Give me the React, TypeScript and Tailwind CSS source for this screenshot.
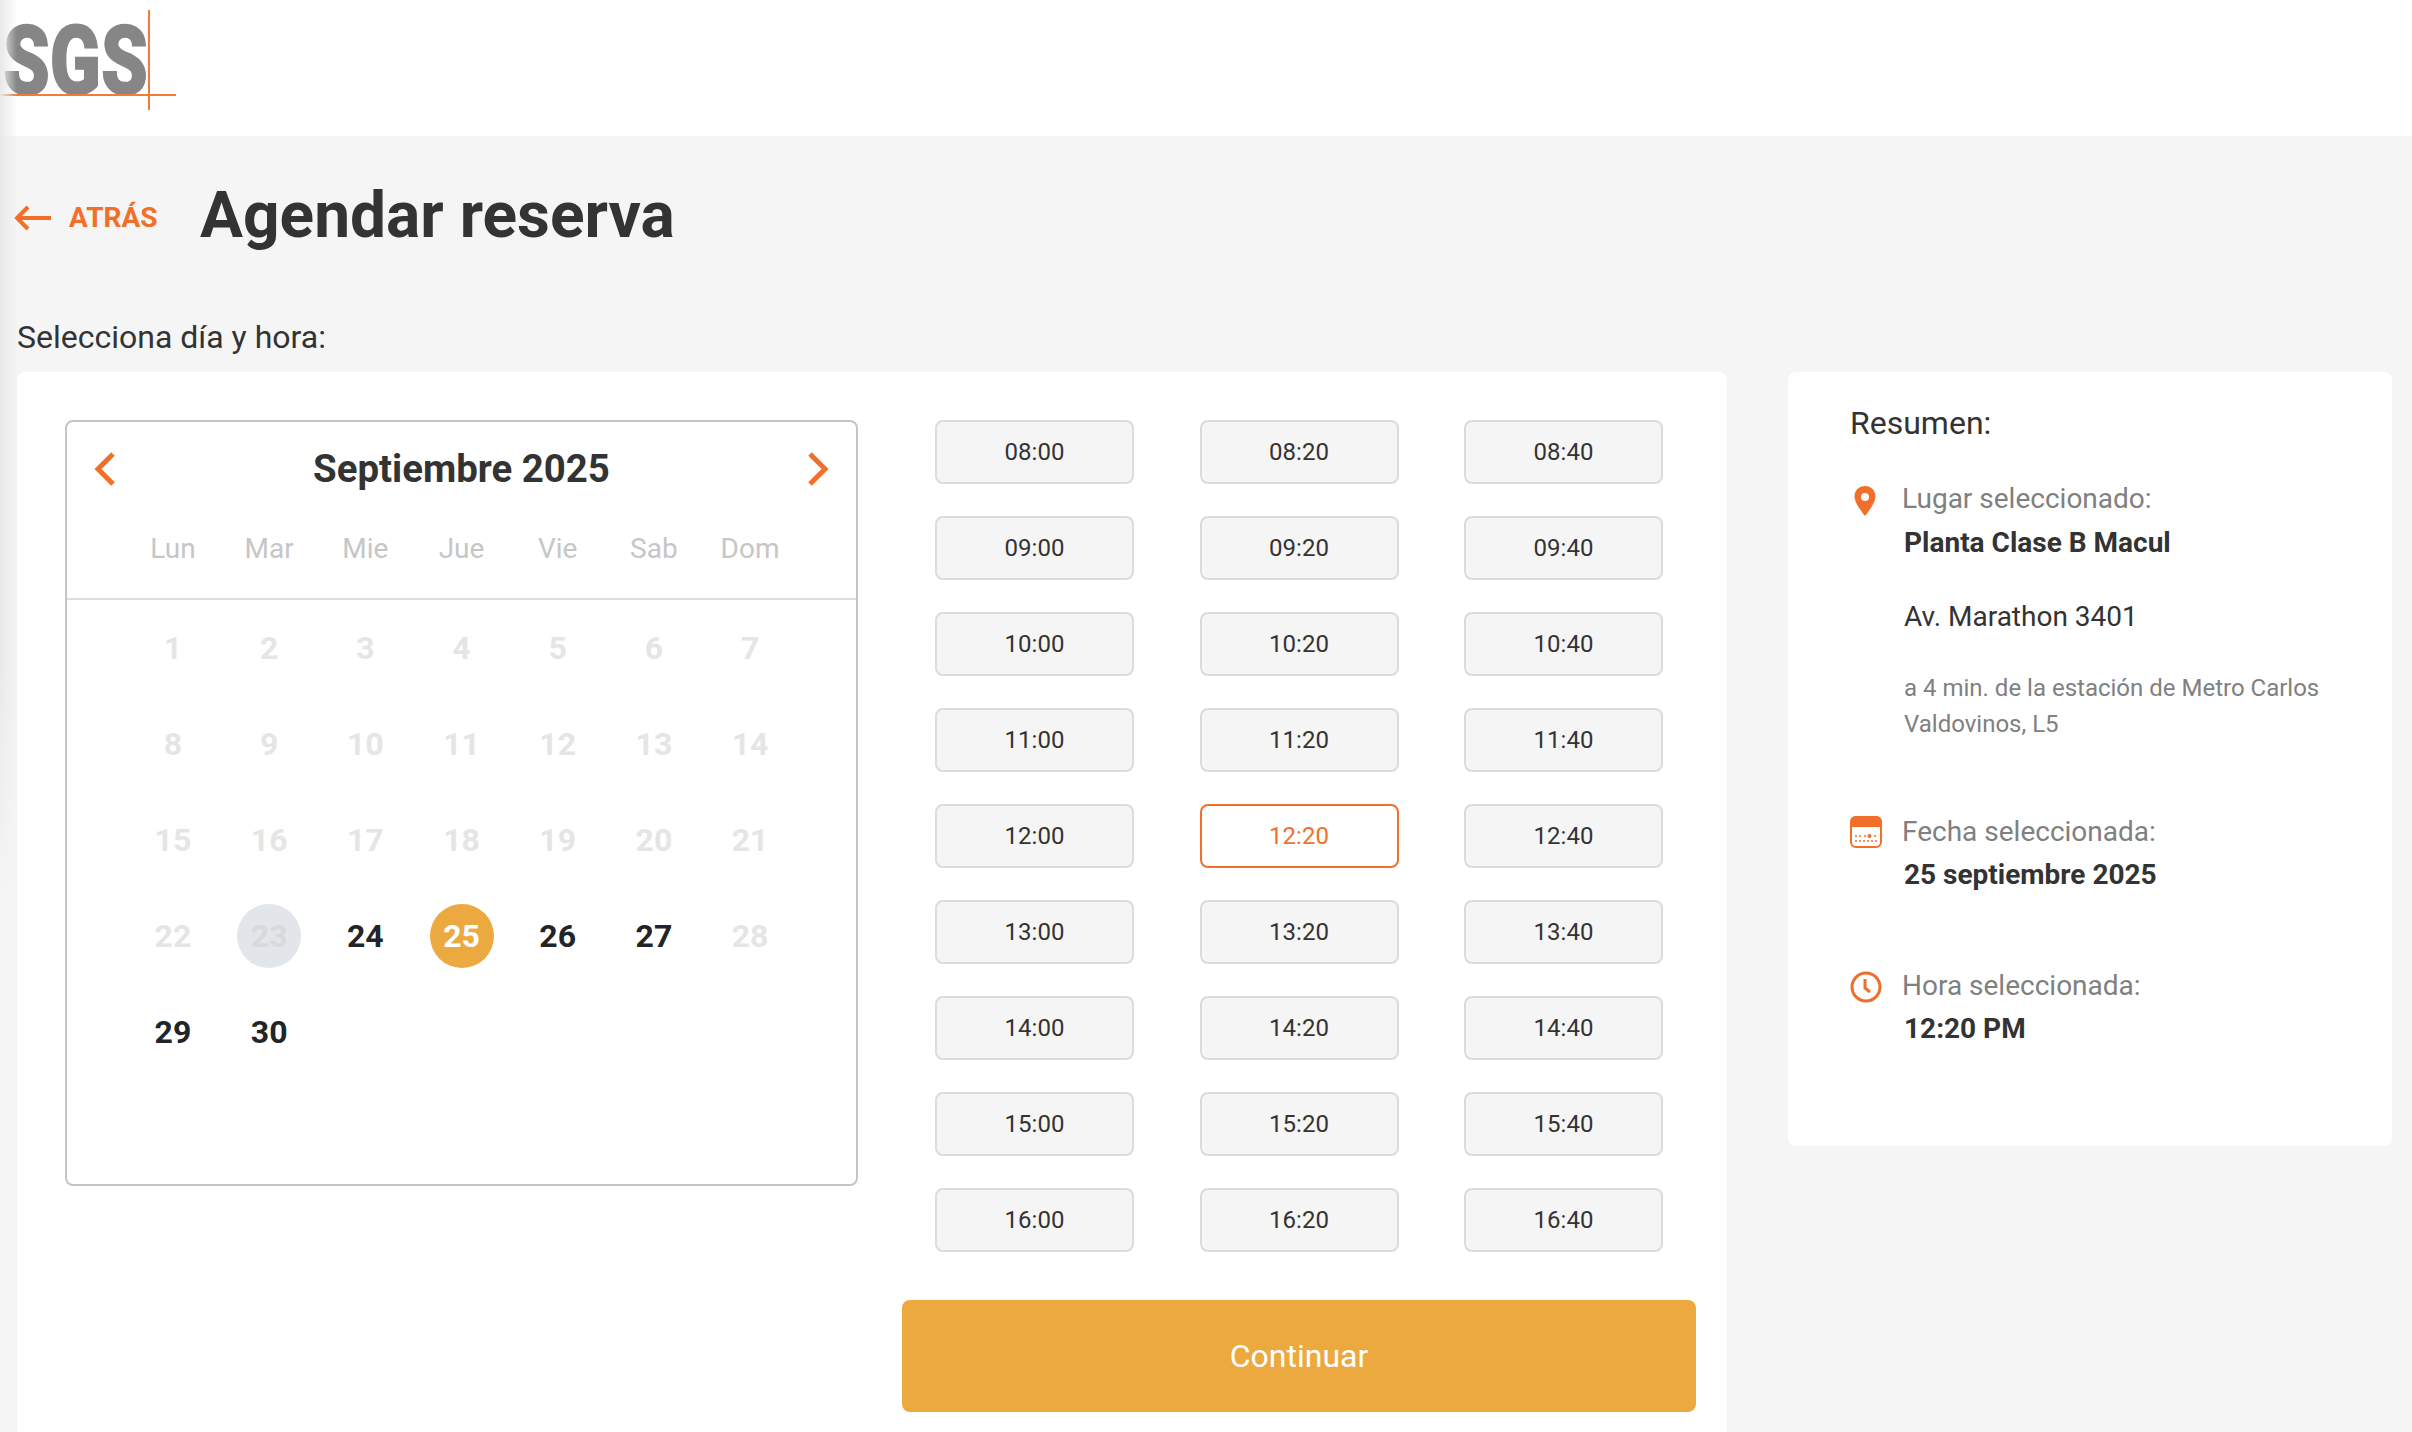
import { ReactNode } from "react";

const WEEK_DAYS = ["Lun", "Mar", "Mie", "Jue", "Vie", "Sab", "Dom"];
const ACTIVE_DAYS = [24, 26, 27, 29, 30];
const HOURS = ["08", "09", "10", "11", "12", "13", "14", "15", "16"];
const MINUTES = ["00", "20", "40"];
const SELECTED_TIME = "12:20";

function Logo() {
    return (
        <svg width="220" height="110" viewBox="0 0 220 110" className="block">
            <text
                transform="translate(3 93.500) scale(.78 1)"
                fill="#868686"
                stroke="#868686"
                strokeWidth="1.500"
                fontFamily="Roboto, sans-serif"
                fontWeight="900"
                fontSize="96"
            >
                SGS
            </text>
            <path d="M0 95h176M149 10v100" stroke="#f47a3c" strokeWidth="2" fill="none" />
        </svg>
    );
}

function Chevron({ dir }: { dir: "left" | "right" }) {
    return (
        <svg width="22" height="34" viewBox="0 0 22 34" fill="none">
            <path
                d={dir === "left" ? "M19 2 4 17l15 15" : "M3 2l15 15L3 32"}
                stroke="#f26f2a"
                strokeWidth="5"
            />
        </svg>
    );
}

function PinIcon() {
    return (
        <svg width="22" height="30" viewBox="0 0 22 30">
            <path
                fillRule="evenodd"
                fill="#f26f2a"
                d="M11 0C4.9 0 .5 4.6.5 10.4.5 17.5 11 30 11 30s10.500-12.500 10.500-19.600C21.500 4.600 17.100 0 11 0Zm0 7a4 4 0 1 1 0 8 4 4 0 0 1 0-8Z"
            />
        </svg>
    );
}

function CalendarIcon() {
    return (
        <svg width="32" height="32" viewBox="0 0 32 32">
            <rect x="1" y="1" width="30" height="30" rx="5" fill="#fff" stroke="#f26f2a" strokeWidth="2" />
            <path d="M6 0h20a6 6 0 0 1 6 6v5H0V6a6 6 0 0 1 6-6Z" fill="#f26f2a" />
            <g fill="#f26f2a">
                <circle cx="6" cy="20" r="1" />
                <circle cx="10" cy="20" r="1" />
                <circle cx="15" cy="20" r="1" />
                <circle cx="19.500" cy="20" r="2" />
                <circle cx="25" cy="20" r="1" />
                <circle cx="6" cy="25" r="1" />
                <circle cx="10" cy="25" r="1" />
                <circle cx="14" cy="25" r="1" />
                <circle cx="18" cy="25" r="1" />
                <circle cx="22" cy="25" r="1" />
                <circle cx="26" cy="25" r="1" />
            </g>
        </svg>
    );
}

function ClockIcon() {
    return (
        <svg width="32" height="32" viewBox="0 0 32 32" fill="none" stroke="#ec6f2e">
            <circle cx="16" cy="16" r="14" strokeWidth="3" />
            <path d="M15 8v9l5 4" strokeWidth="3" />
        </svg>
    );
}

function SummaryItem({ icon, label, children }: { icon: ReactNode; label: string; children: ReactNode }) {
    return (
        <div className="flex">
            <div className="w-[52px] shrink-0">{icon}</div>
            <div className="min-w-0">
                <div className="text-[28px] leading-[40px] text-[#808080]">{label}</div>
                {children}
            </div>
        </div>
    );
}

function Calendar() {
    const days = Array.from({ length: 30 }, (_, i) => i + 1);

    return (
        <div className="w-[793px] h-[766px] shrink-0 border-2 border-[#c4c4c4] rounded-[8px]">
            <div className="h-[178px] border-b-2 border-[#dedede] flex flex-col">
                <div className="flex items-center justify-between px-[27px] h-[94px]">
                    <Chevron dir="left" />
                    <span className="text-[38.400px] font-bold leading-[44px] text-[#333333]">Septiembre 2025</span>
                    <Chevron dir="right" />
                </div>
                <div className="grid grid-cols-[repeat(7,96.2px)] justify-center pt-[13px]">
                    {WEEK_DAYS.map(d => (
                        <div key={d} className="text-center text-[28px] leading-[40px] text-[#c6c6c6]">{d}</div>
                    ))}
                </div>
            </div>
            <div className="grid grid-cols-[repeat(7,96.2px)] auto-rows-[96px] justify-center">
                {days.map(day => {
                    const isSelected = day === 25;
                    const isActive = ACTIVE_DAYS.includes(day);
                    return (
                        <div key={day} className="flex items-center justify-center">
                            <div
                                className={
                                    "w-[64px] h-[64px] rounded-full flex items-center justify-center text-[32px] font-bold " +
                                    (isSelected
                                        ? "bg-[#eca93f] text-white"
                                        : isActive
                                            ? "text-[#212529]"
                                            : day === 23
                                                ? "bg-[#e2e5e9] text-[#d9d9d9]"
                                                : "text-[#e5e5e5]")
                                }
                            >
                                {day}
                            </div>
                        </div>
                    );
                })}
            </div>
        </div>
    );
}

function TimeGrid() {
    return (
        <div className="grid grid-cols-[repeat(3,199px)] gap-x-[65.500px] gap-y-[32px]">
            {HOURS.map(h =>
                MINUTES.map(m => {
                    const time = `${h}:${m}`;
                    return (
                        <button
                            key={time}
                            className={
                                "h-[64px] rounded-[8px] border-2 text-[24px] " +
                                (time === SELECTED_TIME
                                    ? "bg-white border-[#f26f2a] text-[#f26f2a]"
                                    : "bg-[#f5f5f5] border-[#dcdcdc] text-[#333333]")
                            }
                        >
                            {time}
                        </button>
                    );
                })
            )}
        </div>
    );
}

export default function App() {
    return (
        <div className="relative h-[1432px] overflow-hidden bg-[#f5f5f5] font-['Roboto',sans-serif] text-[#333333]">
            {/* soft shadow down the left edge */}
            <div className="absolute left-0 top-0 h-[900px] w-[17px] bg-gradient-to-r from-[#e9e9e9] to-transparent [mask-image:linear-gradient(to_bottom,black_75%,transparent)]" />

            <header className="h-[136px] bg-white pt-0">
                <Logo />
            </header>

            <div className="flex items-center h-[76px] mt-[42px] pl-[14px]">
                <a className="flex items-center gap-[18px] mt-[4px] text-[#f26f2a] text-[28px] font-bold w-[186px]">
                    <svg width="37" height="26" viewBox="0 0 37 26" fill="none" stroke="#f26f2a" strokeWidth="4">
                        <path d="M37 13H3M14 2 3 13l11 11" />
                    </svg>
                    ATRÁS
                </a>
                <h1 className="text-[64px] font-bold leading-[76px]">Agendar reserva</h1>
            </div>

            <p className="mt-[59px] ml-[17px] text-[32px] leading-[48px]">Selecciona día y hora:</p>

            <div className="flex items-start gap-[61px] mt-[11px] ml-[17px]">
                <main className="w-[1710px] h-[1060px] bg-white rounded-t-[8px] flex pt-[48px] pl-[48px]">
                    <Calendar />
                    <div className="w-[794px] ml-[44px] flex flex-col items-center">
                        <TimeGrid />
                        <button className="w-full h-[112px] mt-[48px] rounded-[8px] bg-[#eca93f] text-white text-[32px]">
                            Continuar
                        </button>
                    </div>
                </main>

                <aside className="w-[604px] h-[774px] bg-white rounded-[8px] pt-[27px] pl-[62px] pr-[40px]">
                    <h2 className="text-[32px] leading-[48px] font-normal">Resumen:</h2>
                    <div className="mt-[32px]">
                        <SummaryItem icon={<div className="pl-[4px] pt-[7px]"><PinIcon /></div>} label="Lugar seleccionado:">
                            <div className="mt-[4px] ml-[2px] text-[28px] leading-[40px] font-bold">Planta Clase B Macul</div>
                            <div className="mt-[34px] ml-[2px] text-[28px] leading-[40px]">Av. Marathon 3401</div>
                            <div className="mt-[33px] ml-[2px] text-[24px] leading-[36px] text-[#808080]">
                                a 4 min. de la estación de Metro Carlos Valdovinos, L5
                            </div>
                        </SummaryItem>
                    </div>
                    <div className="mt-[70px]">
                        <SummaryItem icon={<div className="pt-[4px]"><CalendarIcon /></div>} label="Fecha seleccionada:">
                            <div className="mt-[3px] ml-[2px] text-[28px] leading-[40px] font-bold">25 septiembre 2025</div>
                        </SummaryItem>
                    </div>
                    <div className="mt-[71px]">
                        <SummaryItem icon={<div className="pt-[5px]"><ClockIcon /></div>} label="Hora seleccionada:">
                            <div className="mt-[3px] ml-[2px] text-[28px] leading-[40px] font-bold">12:20 PM</div>
                        </SummaryItem>
                    </div>
                </aside>
            </div>
        </div>
    );
}
